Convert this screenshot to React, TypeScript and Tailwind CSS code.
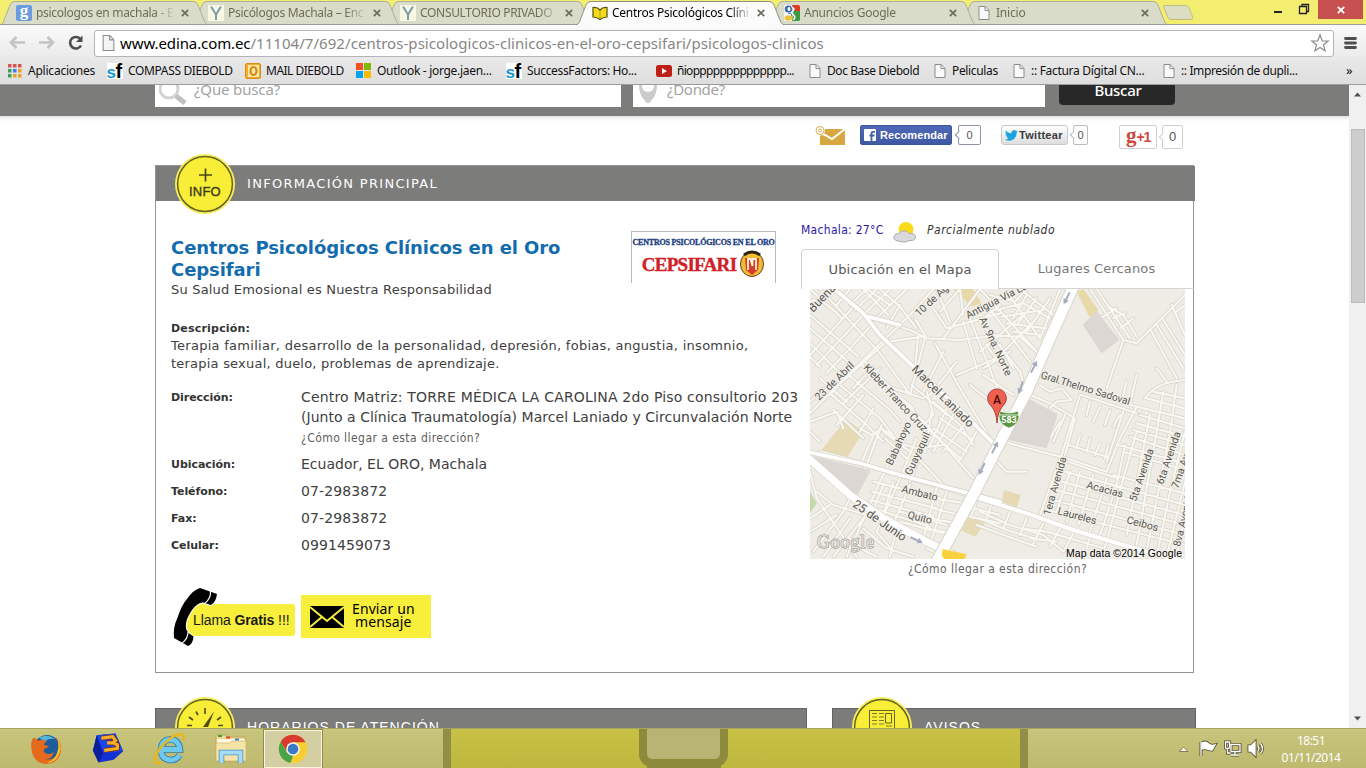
import React from "react";

const ui = "font-['Noto_Sans','Open_Sans',sans-serif]";
const verdana = "font-['DejaVu_Sans',sans-serif]";
const tahoma = "font-['DejaVu_Sans_Condensed','DejaVu_Sans',sans-serif] [font-stretch:condensed]";

/* ---------- browser chrome ---------- */

function PageIcon() {
  return (
    <svg width="12" height="14" viewBox="0 0 12 14" className="shrink-0">
      <path d="M1 .5h6.2L11 4.4v9.1H1z" fill="#fafafa" stroke="#8c8c8c" />
      <path d="M7 .8v3.8h3.8" fill="none" stroke="#8c8c8c" />
    </svg>
  );
}

function GoogleBlue() {
  return (
    <span className="flex size-4 items-center justify-center rounded-[2px] bg-[#6d9be0] pb-[5px] font-['Liberation_Serif',serif] text-[17px] leading-none font-bold text-white">
      g
    </span>
  );
}

function YIcon() {
  return (
    <svg width="16" height="16" viewBox="0 0 16 16">
      <rect width="16" height="16" fill="#f7f8e2" />
      <path d="M3 1.5L8 9.5V15M13 1.5L8 9.5" fill="none" stroke="#7f99ad" strokeWidth="2" />
    </svg>
  );
}

function BookIcon() {
  return (
    <svg width="16" height="16" viewBox="0 0 16 16">
      <path d="M1 2.500q4.500-.5 7 2.500 2.500-3 7-2.500V12q-4 0-7 2.500Q5 12 1 12z" fill="#f2dc1d" stroke="#55500f" strokeWidth="1.200" />
      <path d="M8 5v8" stroke="#a89713" strokeWidth=".8" />
    </svg>
  );
}

function GoogleColour() {
  return (
    <svg width="16" height="16" viewBox="0 0 16 16">
      <rect width="16" height="16" rx="1.5" fill="#fff" />
      <path d="M8 0h6.5Q16 0 16 1.500V6H9z" fill="#df3a26" />
      <path d="M9 6h7v8.500Q16 16 14.500 16H8z" fill="#3d9b46" />
      <ellipse cx="4.500" cy="4" rx="3.800" ry="3.600" fill="#3a6aa8" />
      <ellipse cx="5" cy="4" rx="1.500" ry="2" fill="#fff" />
      <path d="M4 8q4 0 4 2T4 12" fill="#fff" stroke="#3a6aa8" />
      <ellipse cx="4.500" cy="13" rx="4" ry="2.700" fill="#f0c03a" />
      <path d="M8 2l2 2-2 4 3 4-1.500 3" fill="none" stroke="#fff" strokeWidth="1.500" />
    </svg>
  );
}

const tabs = [
  { icon: <GoogleBlue />, title: "psicologos en machala - E", z: "z-[4]", ls: "tracking-[-0.3px]" },
  { icon: <YIcon />, title: "Psicólogos Machala – Enc", z: "z-[3]", ls: "tracking-[-0.3px]" },
  { icon: <YIcon />, title: "CONSULTORIO PRIVADO", z: "z-[2]", ls: "tracking-[-0.32px]" },
  { icon: <BookIcon />, title: "Centros Psicológicos Clíni", z: "z-[9]", active: true, ls: "tracking-[-0.25px]" },
  { icon: <GoogleColour />, title: "Anuncios Google", z: "z-[2]", ls: "tracking-[-0.25px]" },
  { icon: <PageIcon />, title: "Inicio", z: "z-[1]", ls: "tracking-[-0.2px]" },
];

function TabStrip() {
  return (
    <div className="relative flex h-[25px] bg-[#f4ee70]">
      <div className="absolute inset-x-0 bottom-0 z-[5] h-px bg-[#9c9c94]" />
      {tabs.map((t) => (
        <div key={t.title} className={`relative flex h-[25px] w-[192px] shrink-0 items-center pt-px pl-4 ${t.z}`}>
          <svg width="210" height="25" className="absolute top-0 left-0 overflow-visible">
            <path
              d="M0 25C3 24 3.500 22 4.500 19L10 5Q11.500 1.500 14 1.500H194Q196.500 1.500 198 5L203.500 19Q205 24 208 25"
              fill={t.active ? "#fbfbfb" : "#d9dcc8"}
              stroke={t.active ? "#8f8f88" : "#aeb09a"}
            />
          </svg>
          <span className="relative flex w-4 justify-center">{t.icon}</span>
          <span
            className={`relative ml-1 w-[141px] overflow-hidden text-[12px] leading-4 whitespace-nowrap ${ui} ${t.ls} ${t.active ? "text-black" : "text-[#6e6e56]"} [mask-image:linear-gradient(to_right,#000_118px,transparent_140px)]`}
          >
            {t.title}
          </span>
          <svg width="8" height="8" viewBox="0 0 8 8" className="relative ml-1 shrink-0">
            <path d="M.8.8l6.400 6.400M7.200.8L.8 7.200" stroke="#6b6b5c" strokeWidth="1.700" />
          </svg>
        </div>
      ))}
      <svg width="36" height="20" className="mt-[4px] ml-[10px] overflow-visible">
        <path d="M2 1.500h22q2 0 3 2l3.500 9q1 3-1.500 3H9q-2 0-3-2L2 4Q1 1.500 2 1.500z" fill="#dcdec4" stroke="#c1bd80" />
      </svg>
      <div className="ml-auto flex">
        <svg width="60" height="19" className="mr-[4px]">
          <path d="M20 12h8" stroke="#222" strokeWidth="2" />
          <path d="M45.500 6.500h7v7h-7zM48 6.500V4.500h6.500v7H53" fill="none" stroke="#222" strokeWidth="1.300" />
        </svg>
        <div className="mr-[3px] flex h-[19px] w-[45px] items-center justify-center bg-[#c75050]">
          <svg width="8" height="8" viewBox="0 0 8 8">
            <path d="M.8.8l6.400 6.400M7.200.8L.8 7.200" stroke="#fff" strokeWidth="1.800" />
          </svg>
        </div>
      </div>
    </div>
  );
}

function Toolbar() {
  return (
    <div className="flex h-[32px] items-center bg-linear-to-b from-[#fafafa] to-[#ebebeb] pt-[4px]">
      <svg width="84" height="24" viewBox="0 0 84 24" className="ml-[6px] shrink-0">
        <g fill="none" stroke="#c3c3c3" strokeWidth="2.600">
          <path d="M19 11.500H5M10.500 6L5 11.500l5.500 5.500" />
          <path d="M33 11.500h14M41.500 6l5.500 5.500-5.500 5.500" />
        </g>
        <path d="M74.500 8.200A5.800 5.800 0 1 0 75 14.500" fill="none" stroke="#4c4c4c" strokeWidth="2.600" />
        <path d="M76.500 4.500v6.500H70z" fill="#4c4c4c" />
      </svg>
      <div className="ml-[4px] flex h-[27px] w-[1240px] shrink-0 items-center rounded-[3px] border border-[#b4b4b4] bg-white pl-[7px]">
        <svg width="13" height="16" viewBox="0 0 12 15" className="shrink-0">
          <path d="M1 .5h6.200L11 4.400v10.100H1z" fill="#f5f5f5" stroke="#8c8c8c" />
          <path d="M7 .8v3.800h3.800" fill="none" stroke="#8c8c8c" />
        </svg>
        <span className={`ml-[5px] text-[15px] leading-5 tracking-[0.05px] whitespace-nowrap text-[#868686] ${ui}`}>
          <span className="tracking-[-0.1px] text-black">www.edina.com.ec</span>
          /11104/7/692/centros-psicologicos-clinicos-en-el-oro-cepsifari/psicologos-clinicos
        </span>
        <svg width="20" height="20" viewBox="0 0 20 20" className="mr-[3px] ml-auto">
          <path d="M10 1.800l2.200 6 6 .2-4.800 3.800 1.700 6L10 14.400l-5.100 3.400 1.700-6L1.800 8l6-.2z" fill="#fff" stroke="#8c8c8c" strokeWidth="1.200" />
        </svg>
      </div>
      <svg width="14" height="14" className="ml-[10px]">
        <path d="M1.500 2.500h10M1.500 7h10M1.500 11.500h10" stroke="#4f4f4f" strokeWidth="2.800" strokeLinecap="round" />
      </svg>
    </div>
  );
}

function AppsIcon() {
  const c = ["#d9534f", "#d9534f", "#d9534f", "#3b9e5a", "#3f7fe0", "#e5a52d", "#3b9e5a", "#e5a52d", "#e5a52d"];
  return (
    <svg width="14" height="14">
      {c.map((f, i) => (
        <rect key={i} x={(i % 3) * 5} y={Math.floor(i / 3) * 5} width="3.500" height="3.500" fill={f} />
      ))}
    </svg>
  );
}

function SfIcon() {
  return (
    <svg width="16" height="16" viewBox="0 0 16 16" className="font-['Liberation_Sans',sans-serif] font-bold">
      <rect width="16" height="16" fill="#fff" />
      <text x="-.5" y="15" fontSize="17" fill="#1597d3">s</text>
      <text x="8.500" y="15" fontSize="20" fill="#000">f</text>
    </svg>
  );
}

function OutlookIcon() {
  return (
    <svg width="16" height="16">
      <rect x=".5" y=".5" width="15" height="15" rx="1.500" fill="#f5ad28" stroke="#d88b16" />
      <rect x="3" y="2" width="11" height="12" fill="#fde9ac" />
      <ellipse cx="8.500" cy="8" rx="3" ry="4" fill="none" stroke="#d98a14" strokeWidth="2.200" />
    </svg>
  );
}

function MsIcon() {
  return (
    <svg width="15" height="15">
      <path d="M0 0h7v7H0z" fill="#f25022" />
      <path d="M8 0h7v7H8z" fill="#7fba00" />
      <path d="M0 8h7v7H0z" fill="#00a4ef" />
      <path d="M8 8h7v7H8z" fill="#ffb900" />
    </svg>
  );
}

function TubeIcon() {
  return (
    <svg width="16" height="12">
      <rect width="16" height="12" rx="2.500" fill="#c01f17" />
      <path d="M6 3v6l5-3z" fill="#fff" />
    </svg>
  );
}

const bookmarks = [
  { icon: <AppsIcon />, label: "Aplicaciones", w: "w-[99px]", gap: "ml-[6px]", ls: "tracking-[-0.22px]" },
  { icon: <SfIcon />, label: "COMPASS DIEBOLD", w: "w-[138px]", gap: "ml-[5px]", ls: "tracking-[-0.35px]" },
  { icon: <OutlookIcon />, label: "MAIL DIEBOLD", w: "w-[111px]", gap: "ml-[5px]", ls: "tracking-[-0.5px]" },
  { icon: <MsIcon />, label: "Outlook - jorge.jaen...", w: "w-[150px]", gap: "ml-[6px]", ls: "tracking-[-0.3px]" },
  { icon: <SfIcon />, label: "SuccessFactors: Ho...", w: "w-[150px]", gap: "ml-[5px]", ls: "tracking-[-0.35px]" },
  { icon: <TubeIcon />, label: "ñiopppppppppppppp...", w: "w-[153px]", gap: "ml-[5px]", ls: "tracking-[-0.7px]" },
  { icon: <PageIcon />, label: "Doc Base Diebold", w: "w-[125px]", gap: "ml-[6px]", ls: "tracking-[-0.42px]" },
  { icon: <PageIcon />, label: "Peliculas", w: "w-[79px]", gap: "ml-[6px]", ls: "tracking-[-0.35px]" },
  { icon: <PageIcon />, label: ":: Factura Dígital CN...", w: "w-[150px]", gap: "ml-[6px]", ls: "tracking-[-0.3px]" },
  { icon: <PageIcon />, label: ":: Impresión de dupli...", w: "w-[183px]", gap: "ml-[6px]", ls: "tracking-[-0.38px]" },
];

function Bookmarks() {
  return (
    <div className={`flex h-[28px] items-center border-b border-[#9d9d9d] bg-linear-to-b from-[#e9e9e9] to-[#dedede] pl-2 text-[12px] text-[#111] ${ui}`}>
      {bookmarks.map((b) => (
        <div key={b.label} className={`flex shrink-0 items-center whitespace-nowrap ${b.w}`}>
          {b.icon}
          <span className={`${b.gap} ${b.ls}`}>{b.label}</span>
        </div>
      ))}
      <span className="text-[13px] leading-none">»</span>
    </div>
  );
}

/* ---------- page pieces ---------- */

function SearchHeader() {
  return (
    <div className="relative z-10 flex h-[31px] shrink-0 items-start bg-[#7c7c7a] pl-[155px] shadow-[0_1px_4px_1px_rgba(0,0,0,0.13)]">
      <div className="flex h-[22px] w-[466px] overflow-hidden bg-white">
        <svg width="30" height="22" className="ml-1">
          <circle cx="10" cy="4" r="9" fill="none" stroke="#d2d2d2" strokeWidth="3" />
          <path d="M17 11l9 7" stroke="#bfbfbf" strokeWidth="5" />
        </svg>
        <span className={`-mt-[8px] ml-[5px] text-[15px] leading-6 tracking-[-0.15px] text-[#a3a3a3] ${ui}`}>¿Que busca?</span>
      </div>
      <div className="ml-3 flex h-[22px] w-[412px] overflow-hidden bg-white">
        <svg width="24" height="22" className="ml-[5px]">
          <path d="M1 0q0 10 6 16 3 4.500 6 0 6-6 6-16z" fill="#cbcbcb" />
          <circle cx="10" cy="1" r="6" fill="#fff" />
        </svg>
        <span className={`-mt-[8px] ml-[5px] text-[15px] leading-6 tracking-[-0.3px] text-[#a3a3a3] ${ui}`}>¿Donde?</span>
      </div>
      <div className="ml-[14px] flex h-[20px] w-[116px] justify-center overflow-hidden rounded-b-[4px] bg-[#282828]">
        <span className={`-mt-[7px] pl-[2px] text-[15px] leading-6 font-medium tracking-[-0.3px] text-white ${ui}`}>Buscar</span>
      </div>
    </div>
  );
}

function Bubble({ w, h, size, border }: { w: string; h: string; size: string; border: string }) {
  return (
    <span className={`relative flex items-center justify-center rounded-[2px] border bg-white font-['Liberation_Sans',sans-serif] text-[#555] ${w} ${h} ${size} ${border}`}>
      <span className={`absolute -left-[3.5px] size-[6px] rotate-45 border-b border-l bg-white ${border}`} />
      0
    </span>
  );
}

function Social() {
  return (
    <div className="flex h-[49px] shrink-0 items-start pt-[9px] pl-[815px]">
      <svg width="31" height="22">
        <path d="M5 4h25v16H5z" fill="#d9a740" />
        <path d="M5 8l5 2 7 4L30 4" fill="none" stroke="#fff" strokeWidth="2" />
        <circle cx="5" cy="5.500" r="5" fill="#fff" />
        <circle cx="5" cy="5.500" r="4" fill="none" stroke="#dba94a" />
        <circle cx="5" cy="5.500" r="1.500" fill="none" stroke="#dba94a" />
      </svg>
      <div className="ml-[14px] flex h-[20px] w-[92px] items-center rounded-[2px] border border-[#3b5998] bg-linear-to-b from-[#4e69b8] to-[#4058a4]">
        <svg width="12" height="12" className="ml-[3px]">
          <rect width="12" height="12" rx="1" fill="#fff" />
          <path d="M7.500 12V4.500Q7.500 2.800 9.300 2.800H11M5.500 6.500h5" fill="none" stroke="#4560ac" strokeWidth="1.800" />
        </svg>
        <span className="ml-[4px] font-['Liberation_Sans',sans-serif] text-[11px] font-bold tracking-[0.1px] text-white">Recomendar</span>
      </div>
      <span className="ml-[6px] flex"><Bubble w="w-[23px]" h="h-[20px]" size="text-[11px]" border="border-[#8d92a8]" /></span>
      <div className="ml-[20px] flex h-[20px] w-[67px] items-center rounded-[3px] border border-[#c8c8c8] bg-linear-to-b from-white to-[#dedede]">
        <svg width="13" height="11" viewBox="0 0 24 20" className="ml-[3px]">
          <path d="M24 2.400c-.9.400-1.800.7-2.800.8 1-.6 1.800-1.600 2.200-2.700-1 .6-2 1-3.100 1.200A4.900 4.900 0 0 0 11.900 6.200C7.800 6 4.200 4 1.700.9.400 3.200 1 6 3.200 7.500c-.8 0-1.600-.2-2.200-.6 0 2.400 1.700 4.400 3.900 4.900-.7.200-1.500.2-2.200.1.600 2 2.400 3.400 4.600 3.400A9.900 9.900 0 0 1 0 17.300 13.900 13.900 0 0 0 7.500 19.500c9.100 0 14.300-7.700 14-14.600 1-.7 1.800-1.600 2.500-2.500z" fill="#1ba3e0" />
        </svg>
        <span className="ml-px font-['Liberation_Sans',sans-serif] text-[11px] font-bold tracking-[0.3px] text-[#3a3a3a]">Twittear</span>
      </div>
      <span className="ml-[5px] flex"><Bubble w="w-[15px]" h="h-[20px]" size="text-[11px]" border="border-[#bbb]" /></span>
      <div className="ml-[31px] flex h-[24px] w-[38px] items-center justify-center rounded-[2px] border border-[#cfcfcf] bg-white pb-[3px] leading-none font-bold text-[#d0473b]">
        <span className="font-['Liberation_Serif',serif] text-[21px]">g</span>
        <span className="pt-[3px] font-['Liberation_Sans',sans-serif] text-[14px] tracking-[-1.2px]">+1</span>
      </div>
      <span className="ml-[5px] flex"><Bubble w="w-[21px]" h="h-[24px]" size="text-[13px]" border="border-[#cfcfcf]" /></span>
    </div>
  );
}

function Badge({ children }: { children: React.ReactNode }) {
  return (
    <svg width="62" height="62" viewBox="0 0 62 62" className="absolute -top-[13px] left-[18px]">
      <circle cx="31" cy="31" r="30" fill="#f6f060" />
      <circle cx="31" cy="31" r="27.400" fill="#f8ee38" stroke="#66621f" strokeWidth="1.500" />
      {children}
    </svg>
  );
}

function Logo() {
  return (
    <div className="flex h-[52px] w-[145px] flex-col items-center border border-b-0 border-[#b3bcb9] bg-white pt-[4px] font-['Liberation_Serif',serif] leading-none font-bold whitespace-nowrap">
      <span className="text-[8px] leading-[14px] tracking-[-0.2px] text-[#173c80] [-webkit-text-stroke:0.3px_#173c80]">CENTROS PSICOLÓGICOS EN EL ORO</span>
      <div className="flex items-center">
        <span className="text-[19px] tracking-[-0.7px] text-[#d01f28] [-webkit-text-stroke:0.4px_#d01f28]">CEPSIFARI</span>
        <svg width="26" height="28" viewBox="0 0 26 28" className="ml-[3px]">
          <ellipse cx="13" cy="14" rx="11.500" ry="12.500" fill="#f1bd35" stroke="#6c3c18" />
          <path d="M5 5q8-6 16 0" fill="none" stroke="#2c2013" strokeWidth="3" />
          <path d="M6 8h14l-1 12-6 5-6-5z" fill="#d63d27" />
          <path d="M9 20V9h2.500l2 7V9H17v11" fill="none" stroke="#fff6d8" strokeWidth="1.800" />
        </svg>
      </div>
    </div>
  );
}

/* Road geometry, in units of a third of a pixel. */
const westRoads =
  "M30 50Q60 30 125 100M30 12L60 40M60 12L240 205L330 330M30 90L175 215M30 130L150 235M30 175L110 255M30 215L60 245M30 210L165 60M50 240L190 90M80 265L215 120M115 300L265 165M30 385L190 225L330 90L400 12M150 12L110 60M200 12L150 60M230 12L165 75M270 12L190 90M320 12L230 100M240 12L300 65L350 130M190 12L265 90M270 60L200 12M200 95L330 135L380 160L480 165L600 150M265 170L370 155M300 60L260 130M380 160L345 100M355 150L345 250M375 160L330 330M430 160L540 12M380 40L440 130L600 85M410 12L450 110M480 12L490 90M405 175L480 310L575 470M420 80L480 12M510 100L545 190L600 330M490 110L530 250M430 200L410 240L370 320M470 230L390 330M470 270L600 215M560 180L600 240M540 110L600 60M190 225L380 420L520 580M140 265L270 375L300 410M120 300L240 400L300 480M90 325L200 420L250 470M180 235L340 370M250 300L370 340M60 280L140 350M30 350L70 310M150 260L90 330M220 245L160 310M240 250L130 355M30 410L110 380L130 430M100 375L190 460M30 440L60 470M190 330L110 420M220 370L180 440M245 420L200 540L130 680L40 800M220 450L160 590M180 430L215 450L245 430L280 455M60 500L180 530L255 560L500 630M250 440L330 500M255 460L320 520M300 475L350 490L430 480M320 420L235 600L165 760L140 815M350 460L300 580L230 740M375 470L330 590M370 420L480 520M400 350L480 420L520 480M380 320L400 390L360 430M440 370L390 480M465 380L400 500M500 410L430 500M530 440L480 525M420 400L520 465M400 430L500 500M335 300L440 390M395 380L375 500M340 505L430 600M220 590L420 640M215 620L410 670M210 645L400 695M205 665L390 725M300 680L440 720M300 710L430 745M250 600L210 700M280 590L240 720M330 600L270 740M410 610L370 760M440 620L390 780M400 640L500 655M400 670L480 690M390 700L470 715M380 730L455 745M30 560L50 640L170 815M50 620L100 660L200 690M30 700L90 660M30 740L110 690M70 815L150 700M100 815L190 700M180 790L230 815M150 760L200 800M190 730L260 790L340 815M230 740L280 800M380 790L430 815M290 730L270 815M520 670L600 690M510 695L600 715M530 645L515 690M575 655L560 700";

const eastRoads =
  "M-30 12L60 110L140 200M-10 60L120 230M-30 110L90 260L110 330M0 30L75 50L110 12M20 75L100 55L180 100M35 95L160 75M50 115L170 130M70 140L150 150M0 150L90 155L140 200M-30 200L110 80M10 230L130 110M-20 250L60 200M30 180L70 250M50 20L150 160M90 12L190 90M110 30L70 100M140 40L80 120M180 40L110 140M210 12L150 160M-60 300L40 380M-20 270L70 330M110 325L180 355L255 400M150 300L180 320L215 310L245 345L200 350L180 370M255 400L225 510M270 330L215 510L150 690M120 265L440 365L585 400M275 330L440 385M300 12L400 165L440 175L585 30M320 12L420 160M355 65L400 90L440 155M370 100L405 85M400 165L350 310M330 100L380 70M390 130L430 100M440 270L420 360M465 340Q500 290 585 285M485 140L560 280M500 120L580 250M520 105L585 210M500 250L530 290M545 60L585 150M560 80L585 60M440 365L390 460L350 560L230 520L20 465M400 380L350 530M410 290L395 350M300 350L290 390M330 365L310 410M360 375L345 420M390 390L370 425M270 450L260 490M300 460L290 500M330 475L315 510M355 480L345 520M235 480L350 515M225 390L190 470M210 410L180 460M30 490L10 520L50 560L110 560M385 480L585 535M400 500L585 555M370 570L585 625M235 530L380 580M225 560L585 660M215 590L585 690M200 615L585 720M190 645L585 750M175 675L585 780M240 560L200 680M270 560L230 710M310 570L265 720M350 580L300 740M405 480L380 600L330 750M440 440L400 580L350 770M480 390L410 750M520 320L500 440L440 780M560 300L540 440L470 800M585 440L540 620L500 815M585 590L530 815M585 690L560 815M450 390L585 430M440 415L585 455M430 435L585 480M420 455L585 510M470 340L585 370M490 320L585 340M-30 680L60 720L160 750L220 800M-30 700L50 735L150 765M-40 720L40 750L140 785M60 680L40 730M110 700L90 750M160 715L130 775M210 730L180 785M250 745L220 800M90 730L170 740L340 790M120 760L200 770M300 755L290 790M350 770L340 800";

const highways = "M252 0L180 160L110 320L15 500L-45 620L-160 830";
const wideWest = "M95 5L190 85L240 150L330 235L470 365L585 480M20 500L180 535L300 570L600 650M205 95L300 120";
const wideEast = "M-60 632L0 650L120 688L250 735L400 780L580 830";

function Arrow({ x, y, r }: { x: number; y: number; r: number }) {
  return (
    <path transform={`translate(${x} ${y}) rotate(${r})`} d="M-20 -3H4V-9L20 0L4 9V3H-20z" fill="#a3adbf" />
  );
}

function MapView() {
  const west = "translate(-10 -4) scale(.33333)";
  const east = "translate(180 -4) scale(.33333)";
  return (
    <svg width="375" height="270" viewBox="0 0 375 270" className="ml-[9px] shrink-0 font-['Roboto',sans-serif]">
      <rect width="375" height="270" fill="#efece5" />
      <g transform={west}>
        <path d="M138 402L190 440L140 520L60 500z" fill="#e6dab4" />
        <path d="M460 12H520L545 55L515 65z" fill="#e8d9a8" />
        <path d="M30 620L50 655L30 685z" fill="#c3dba8" />
        <path d="M500 690L555 715L525 755L480 735z" fill="#e6dab4" />
      </g>
      <g transform={east}>
        <path d="M260 20L280 12L325 75L300 100z" fill="#e8d9a8" />
        <path d="M42 615L92 630L80 668L35 650z" fill="#e6dab4" />
      </g>
      <g fill="none" strokeLinejoin="round" strokeLinecap="round">
        <g stroke="#d8d4c8" strokeWidth="11">
          <path transform={west} d={westRoads} />
          <path transform={east} d={eastRoads} />
        </g>
        <g stroke="#f8f7f2" strokeWidth="6.500">
          <path transform={west} d={westRoads} />
          <path transform={east} d={eastRoads} />
        </g>
      </g>
      <path transform={west} d="M38 513L212 556L170 635z" fill="#dcd7d2" />
      <g transform={east} fill="#dcd7d2">
        <path d="M320 78L388 165L335 205L278 120z" />
        <path d="M105 335L203 388L170 490L42 462z" />
      </g>
      <g fill="none" strokeLinejoin="round" strokeLinecap="round">
        <path transform={west} d={wideWest} stroke="#d8d5cc" strokeWidth="16" />
        <path transform={east} d={wideEast} stroke="#d8d5cc" strokeWidth="16" />
        <path transform={west} d={wideWest} stroke="#fff" strokeWidth="11" />
        <path transform={east} d={wideEast} stroke="#fff" strokeWidth="12" />
        <path transform={west} d="M20 515L150 630L250 700L370 765L470 815" stroke="#d8d5cc" strokeWidth="26" />
        <path transform={west} d="M20 515L150 630L250 700L370 765L470 815" stroke="#fff" strokeWidth="22" />
        <path transform={east} d={highways} stroke="#d8d5cc" strokeWidth="38" />
        <path transform={east} d={highways} stroke="#fff" strokeWidth="32" />
      </g>
      <g transform={west}>
        <path d="M428 792L500 808L490 830H440L425 812z" fill="#fbd13f" />
        <Arrow x={585} y={487} r={-63} />
        <Arrow x={545} y={552} r={117} />
        <Arrow x={350} y={765} r={24} />
      </g>
      <g transform={east}>
        <Arrow x={230} y={40} r={117} />
        <Arrow x={132} y={245} r={-63} />
        <Arrow x={92} y={308} r={110} />
      </g>
      <g fill="#585550" stroke="#f3f1ea" strokeWidth="2" paintOrder="stroke" strokeLinejoin="round" fontSize="10.500">
        <text transform="translate(3 24) rotate(-46)" fontSize="12">Buena</text>
        <text transform="translate(109 28) rotate(-43)">10 de Agosto</text>
        <text transform="translate(158 30) rotate(-27)">Antigua Via La</text>
        <text transform="translate(169 30) rotate(65)">Av 9na. Norte</text>
        <text transform="translate(9 112) rotate(-44)">23 de Abril</text>
        <text transform="translate(53 79) rotate(47)">Kleber Franco Cruz</text>
        <text transform="translate(101 81) rotate(45)" fontSize="12" textLength="82">Marcel Laniado</text>
        <text transform="translate(82 177) rotate(-65)">Babahoyo</text>
        <text transform="translate(101 187) rotate(-65)">Guayaquil</text>
        <text transform="translate(91 203) rotate(14)">Ambato</text>
        <text transform="translate(97 229) rotate(14)">Quito</text>
        <text transform="translate(42 217) rotate(35)" fontSize="12">25 de Junio</text>
        <text transform="translate(230 89) rotate(17)" textLength="93">Gral.Thelmo Sadoval</text>
        <text transform="translate(240 227) rotate(-74)">1era Avenida</text>
        <text transform="translate(276 199) rotate(15)">Acacias</text>
        <text transform="translate(247 225) rotate(15)">Laureles</text>
        <text transform="translate(316 234) rotate(15)">Ceibos</text>
        <text transform="translate(326 213) rotate(-71)">5ta Avenida</text>
        <text transform="translate(353 196) rotate(-71)">6ta Avenida</text>
        <text transform="translate(368 200) rotate(-71)">7ma Avenida</text>
        <text transform="translate(370 258) rotate(-76)">8va Avenida</text>
      </g>
      <path d="M190 122q9 4 18 0l1 6q-1 8-10 11-9-3-10-11z" fill="#5d9744" stroke="#fff" strokeWidth=".6" />
      <path d="M190 126h19" stroke="#fff" strokeWidth=".8" />
      <text x="199" y="134" textAnchor="middle" fontSize="9" fontWeight="700" fill="#fff">583</text>
      <path d="M187 134Q186.500 122 179.500 115A9.400 9.400 0 1 1 194.500 115Q187.500 122 187 134z" fill="#f0604f" stroke="#9a3027" strokeWidth=".8" />
      <text x="187" y="114.500" textAnchor="middle" fontSize="12" fontWeight="500" fill="#3d0c0a">A</text>
      <text x="7" y="259" fontSize="18" fill="#e6e4df" stroke="#8d8b86" strokeWidth="1" paintOrder="stroke" textLength="57" className="font-['Liberation_Serif',serif]">Google</text>
      <text x="256" y="267.500" fontSize="10.500" fill="#000" stroke="#f1efea" strokeWidth="2" paintOrder="stroke" textLength="116" className="font-['Liberation_Sans',sans-serif]">Map data ©2014 Google</text>
    </svg>
  );
}

function Row({ label, children, h = "h-[27px]" }: { label: string; children: React.ReactNode; h?: string }) {
  return (
    <div className={`flex ${h}`}>
      <span className="w-[130px] shrink-0 pt-px text-[11px] leading-[20px] font-bold tracking-[-0.05px] text-[#333]">{label}</span>
      <div className="text-[14px] leading-[20px] tracking-[0.1px] whitespace-nowrap">{children}</div>
    </div>
  );
}

function Actions() {
  return (
    <div className="flex pl-[2px]">
      <div className="relative h-[60px] w-[123px]">
        <div className="absolute top-[17px] left-[13px] flex h-[32px] w-[109px] items-center rounded-[3px] bg-[#f8ee3c] pl-[7px] font-['Liberation_Sans',sans-serif] text-[14px] tracking-[-0.1px] whitespace-pre text-[#1a1a1a]">
          Llama <b>Gratis</b> !!!
        </div>
        <svg width="46" height="60" viewBox="-1 0 46 60" className="absolute top-0 left-0">
          <path
            d="M26 1L43 7Q42 15 37 18L29 15.500Q24 15 18 23Q12 32 12 37Q11 42 14.500 46L19.500 49.500Q19 57 14 59L0 51Q-1 40 3 32Q8 17 13 12Q19 3 26 1z"
            fill="#000"
            stroke="#fff"
            strokeWidth="2"
            paintOrder="stroke"
          />
          <path d="M36.500 4Q37 12 30.500 16.500M14 45Q14 52 7.500 56.500" fill="none" stroke="#fff" strokeWidth="1.200" />
        </svg>
      </div>
      <div className={`mt-[8px] ml-[5px] flex h-[43px] w-[130px] items-center bg-[#f8ee3c] pl-[9px] text-[14px] leading-[13px] text-black ${ui}`}>
        <svg width="34" height="22" className="shrink-0">
          <rect width="34" height="22" fill="#000" />
          <path d="M0 1L17 15L34 1M0 21L12.500 10.500M34 21L21.500 10.500" fill="none" stroke="#f8ee3c" strokeWidth="2" />
        </svg>
        <span className="ml-[8px] pb-1 text-center tracking-[0.1px] whitespace-nowrap">
          Enviar un
          <br />
          mensaje
        </span>
      </div>
    </div>
  );
}

function InfoCard() {
  return (
    <div className={`ml-[155px] flex h-[508px] w-[1039px] shrink-0 flex-col border border-[#949494] text-[#404040] ${verdana}`}>
      <div className="relative -mr-[2px] flex h-[35px] shrink-0 items-center bg-[#7c7c7a] pl-[91px] text-[13px] tracking-[1.3px] text-white">
        INFORMACIÓN PRINCIPAL
        <Badge>
          <path d="M25 22h13M31.500 15.500v13" stroke="#4a4714" strokeWidth="1.700" />
          <text x="31" y="42.500" textAnchor="middle" fontSize="13" fill="#3f3d1c" stroke="#3f3d1c" strokeWidth=".4" className="font-['Liberation_Sans',sans-serif] tracking-[0.2px]">INFO</text>
        </Badge>
      </div>
      <div className="flex grow">
        <div className="flex w-[630px] shrink-0 flex-col pt-[30px] pl-[15px]">
          <div className="flex h-[89px] items-start">
            <div className="w-[460px] pt-[6px]">
              <h1 className="text-[18px] leading-[22px] font-bold tracking-[-0.08px] text-[#136cad]">
                Centros Psicológicos Clínicos en el Oro
                <br />
                Cepsifari
              </h1>
              <p className="text-[13px] leading-[18px] tracking-[0.19px]">Su Salud Emosional es Nuestra Responsabilidad</p>
            </div>
            <Logo />
          </div>
          <div className="h-[67px] text-[13px] leading-[18px] tracking-[0.28px]">
            <p className="text-[11px] leading-[17px] font-bold tracking-[0.2px] text-[#333]">Descripción:</p>
            <p>
              Terapia familiar, desarrollo de la personalidad, depresión, fobias, angustia, insomnio,
              <br />
              <span className="tracking-[0.22px]">terapia sexual, duelo, problemas de aprendizaje.</span>
            </p>
          </div>
          <Row label="Dirección:" h="h-[67px]">
            <span className="tracking-[0.18px]">Centro Matriz: TORRE MÉDICA LA CAROLINA 2do Piso consultorio 203</span>
            <br />
            <span className="tracking-[0.03px]">(Junto a Clínica Traumatología) Marcel Laniado y Circunvalación Norte</span>
            <br />
            <span className={`text-[12px] tracking-[0.45px] text-[#5c5c5c] ${tahoma}`}>¿Cómo llegar a esta dirección?</span>
          </Row>
          <Row label="Ubicación:"><span className="tracking-normal">Ecuador, EL ORO, Machala</span></Row>
          <Row label="Teléfono:">07-2983872</Row>
          <Row label="Fax:">07-2983872</Row>
          <Row label="Celular:" h="h-[52px]">0991459073</Row>
          <Actions />
        </div>
        <div className="flex w-[392px] flex-col pt-[16px] pl-[15px]">
          <div className={`flex h-[32px] items-center pb-[6px] text-[12px] whitespace-nowrap ${tahoma}`}>
            <span className="w-[83px] tracking-[0.3px] text-[#2a17a8]">Machala: 27°C</span>
            <svg width="25" height="22" className="mt-[3px] ml-[9px]">
              <circle cx="13" cy="8.500" r="7.500" fill="#fadb18" />
              <path d="M5 20Q0 19 1 15.500Q2 12 6 12.500Q8 9 12 10Q15 10 16 12.500Q23 12 22.500 16Q22 20 17 19.500Q12 22.500 5 20z" fill="#d9d9dc" stroke="#adadb0" />
            </svg>
            <span className="ml-[9px] tracking-[0.5px] text-[#333] italic">Parcialmente nublado</span>
          </div>
          <div className="-mr-[16px] flex h-[40px] shrink-0 text-[13px]">
            <div className="flex w-[198px] items-center justify-center rounded-t-[4px] border border-b-0 border-[#d4d4d4] tracking-[0.2px] text-[#555]">Ubicación en el Mapa</div>
            <div className="flex grow items-center justify-center border-b border-[#d4d4d4] tracking-[0.12px] text-[#777]">Lugares Cercanos</div>
          </div>
          <MapView />
          <span className={`pt-[2px] text-center text-[12px] leading-[16px] tracking-[0.45px] text-[#666] -mr-[16px] ${tahoma}`}>¿Cómo llegar a esta dirección?</span>
        </div>
      </div>
    </div>
  );
}

function SectionHead({ title, w, children }: { title: string; w: string; children: React.ReactNode }) {
  return (
    <div className={`relative h-[36px] border border-[#636363] bg-[#7c7c7a] pt-[9px] pl-[91px] font-['Liberation_Sans',sans-serif] text-[14px] leading-[18px] tracking-[1.02px] text-white ${w}`}>
      {title}
      <Badge>{children}</Badge>
    </div>
  );
}

function Sections() {
  return (
    <div className="mt-[35px] ml-[155px] flex gap-[25px]">
      <SectionHead title="HORARIOS DE ATENCIÓN" w="w-[652px]">
        <path d="M31 12v6M22 15.500l2 3.500M15 21l4 3M47 21l-4 3M13 29.500h5M44 29.500h5" stroke="#4f4b12" strokeWidth="1.600" />
        <path d="M29 31L40 15.500L34 31z" fill="#4f4b12" />
      </SectionHead>
      <SectionHead title="AVISOS" w="w-[364px]">
        <path d="M18.500 14.500h25v28h-25zM34.500 17.500h6v9.500h-6z" fill="none" stroke="#66621f" />
        <path d="M21 17.500h5M28 17.500h5M21 21h5M28 21h5M21 24.500h5M28 24.500h5M21 28h5M28 28h5M35 30h6" stroke="#817b27" />
      </SectionHead>
    </div>
  );
}

function Scrollbar() {
  return (
    <div className="flex w-[17px] shrink-0 flex-col items-center bg-[#f0f0f0]">
      <svg width="17" height="44">
        <path d="M5 11.500L8.500 7.500l3.500 4z" fill="#505050" />
      </svg>
      <div className="h-[174px] w-[14px] border border-[#bcbcbc] bg-[#cdcdcd]" />
      <svg width="17" height="17" className="mt-auto">
        <path d="M5 5.500l3.500 4 3.500-4z" fill="#505050" />
      </svg>
    </div>
  );
}

/* ---------- taskbar ---------- */

function TaskIcons() {
  return (
    <>
      <svg width="32" height="32" viewBox="0 0 32 32" className="ml-[30px]">
        <circle cx="17" cy="15" r="13" fill="#1d5d9d" />
        <path d="M9 5q8-5 16 1-7-1-9 2-4-1-7-3z" fill="#55b6dc" />
        <path d="M3 5Q7 5 8 8Q13 5 17 9Q14 9 14 12L19 13Q18 15 14 16Q13 21 19 21Q22 21 24 19Q22 27 15 26Q24 28 28 20Q30 12 26 4Q32 10 31 18Q29 30 17 31Q5 31 2 19Q0 10 3 5z" fill="#e66a1c" />
        <path d="M27 5Q32 12 30 19Q27 30 16 30Q25 27 27 20Q30 13 27 5z" fill="#f9bd2c" />
      </svg>
      <svg width="32" height="33" viewBox="0 0 34 34" className="ml-[30px]">
        <path d="M5 3L25 1L33 20L23 29L7 32L1 19z" fill="#1230d3" />
        <path d="M5 3L25 1L33 20L12 22z" fill="#1746f4" />
        <path d="M1 19L5 3L12 22L7 32z" fill="#0a1f9b" />
        <path d="M10 6L22 4.500L25 8.500L22 11H16M22 11L27 13L27 17L13 19" fill="none" stroke="#7b2b0a" strokeWidth="5" />
        <path d="M10 6L22 4.500L25 8.500L22 11H16M22 11L27 13L27 17L13 19" fill="none" stroke="#f9ae28" strokeWidth="3.300" />
      </svg>
      <svg width="34" height="34" viewBox="0 0 34 34" className="ml-[29px]">
        <path d="M26.500 23Q23 28.500 17 28Q8 27 8 17.500Q8.500 8 17.500 7.500Q26 8 27 17.500H10" fill="none" stroke="#3279ad" strokeWidth="6.500" />
        <path d="M26.500 23Q23 28.500 17 28Q8 27 8 17.500Q8.500 8 17.500 7.500Q26 8 27 17.500H10" fill="none" stroke="#6ec9ee" strokeWidth="4.800" />
        <path d="M30 8Q33 -1 21 4Q9 11 3 23Q-1 34 8 30" fill="none" stroke="#e7b71c" strokeWidth="2.600" />
      </svg>
      <svg width="34" height="32" viewBox="0 0 34 32" className="ml-[27px]">
        <path d="M2 5V3q0-1 1-1h9l2 2h16q1 0 1 2v22H2z" fill="#efd997" stroke="#c4a75a" />
        <path d="M3 6h28v4H3z" fill="#fff8de" />
        <path d="M2 10h14l2-2h14v20H2z" fill="#f5e3a8" stroke="#cdb36c" strokeWidth=".7" />
        <path d="M4 3h4" stroke="#36a13f" strokeWidth="2" />
        <path d="M12 4.500h4" stroke="#d84a33" strokeWidth="2" />
        <path d="M21 6.500h4" stroke="#3b86d3" strokeWidth="2" />
        <path d="M7.500 30V19.500h19V30" fill="none" stroke="#3f91c4" strokeWidth="5.500" />
        <path d="M7.500 30V19.500h19V30" fill="none" stroke="#a6dbf4" strokeWidth="4" />
      </svg>
      <div className="ml-[15px] flex h-[40px] w-[60px] items-center justify-center border-2 border-[#faf7da] bg-[#d3cfa2] outline outline-1 -outline-offset-1 outline-[#8e8a52]">
        <svg width="30" height="30" viewBox="0 0 30 30">
          <circle cx="15" cy="15" r="14.300" fill="#f8cf33" />
          <path d="M2.700 7.800A14.300 14.300 0 0 1 27.500 8.200H15L9 18z" fill="#d93a2f" />
          <path d="M2.700 7.800L9 18.500L15 21.800L12.500 29A14.300 14.300 0 0 1 2.700 7.800z" fill="#4aa349" />
          <circle cx="15" cy="15" r="6.800" fill="#f6f6ef" />
          <circle cx="15" cy="15" r="5.300" fill="#3a7ac8" />
        </svg>
      </div>
    </>
  );
}

function Taskbar() {
  return (
    <div className="flex h-[40px] border-t border-[#a8a463] bg-linear-to-b from-[#c8c57c] to-[#bdb96f]">
      <div className="flex w-[443px] shrink-0 items-center">
        <TaskIcons />
      </div>
      <div className="w-[585px] shrink-0 border-x-[8px] border-[#928e48] bg-linear-to-b from-[#c8c146] to-[#beb73d] pl-[188px]">
        <div className="flex w-[89px] flex-col items-center">
          <div className="h-[38px] w-[89px] rounded-b-[13px] border-8 border-t-0 border-[#8e8a3c] bg-[#b8b474]" />
          <div className="-mt-[4px] h-[5px] w-[74px] bg-[#8e8a3c]" />
        </div>
      </div>
      <div className={`flex grow items-center text-center text-[12px] leading-[17px] tracking-[-0.5px] text-white ${ui}`}>
        <svg width="90" height="20" viewBox="0 0 90 20" className="ml-[150px] overflow-visible">
          <path d="M1.500 12.500L5.500 8l4.500 4.500z" fill="#fff" stroke="#6c683a" strokeWidth=".8" />
          <g stroke="#555130" strokeWidth="3" fill="none">
            <path d="M23 3v14M24 4q4-2 6 .5t7 1.500l-3 5q-3 0-5-1t-5 0" />
            <path d="M53 5.500h9v7h-9zM57 13v3M53 16h8M47.500 3v6q2 1 4 0V3zM49.500 9v5h3" />
            <path d="M71 7v5h2l4 4V3l-4 4zM80 7q2 2.500 0 5M82.500 4.500q4 5 0 10" />
          </g>
          <g stroke="#fff" strokeWidth="1.300" fill="none">
            <path d="M23 3v14" />
            <path d="M24 4q4-2 6 .5t7 1.500l-3 5q-3 0-5-1t-5 0z" fill="#fff" />
            <path d="M53 5.500h9v7h-9zM57 13v3M53 16h8M47.500 3v6q2 1 4 0V3zM49.500 9v5h3" />
            <path d="M71 7v5h2l4 4V3l-4 4z" fill="#fff" />
            <path d="M80 7q2 2.500 0 5M82.500 4.500q4 5 0 10" />
          </g>
        </svg>
        <span className="ml-[13px] w-[60px]">
          18:51
          <br />
          01/11/2014
        </span>
      </div>
    </div>
  );
}

export default function App() {
  return (
    <div className="flex h-[768px] w-[1366px] flex-col overflow-hidden bg-white">
      <TabStrip />
      <Toolbar />
      <Bookmarks />
      <div className="flex h-[643px] shrink-0 overflow-hidden">
        <div className="flex w-[1349px] shrink-0 flex-col overflow-hidden">
          <SearchHeader />
          <Social />
          <InfoCard />
          <Sections />
        </div>
        <Scrollbar />
      </div>
      <Taskbar />
    </div>
  );
}
